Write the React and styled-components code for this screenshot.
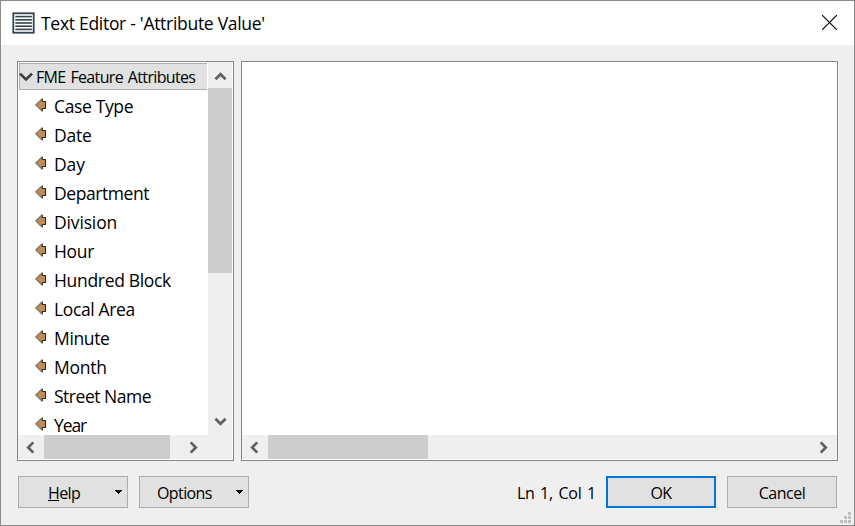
import React from "react";
import styled, { createGlobalStyle } from "styled-components";

const Global = createGlobalStyle`
  * { box-sizing: border-box; }
  body { margin: 0; background: #efefef; }
`;

const Dialog = styled.div`
  width: 855px;
  height: 526px;
  display: flex;
  flex-direction: column;
  background: #efefef;
  border: 1px solid #8b8b8b;
  color: #000;
  font-family: "Open Sans", "Noto Sans", sans-serif;
  position: relative;
  overflow: hidden;
`;

const TitleBar = styled.header`
  height: 44px;
  flex: none;
  display: flex;
  align-items: center;
  background: #fff;
  padding: 0 17px 1px 11px;
  svg { flex: none; display: block; }
`;

const Label = styled.span`
  display: block;
  white-space: pre;
  font-size: ${(p) => p.$size || 17}px;
  line-height: 24px;
  letter-spacing: ${(p) => p.$track || 0}px;
  word-spacing: ${(p) => p.$words || 0}px;
`;

const Title = styled(Label)`
  flex: 1;
  margin: 1px 0 0 6px;
`;

const Panels = styled.main`
  display: flex;
  gap: 7px;
  height: 400px;
  margin: 16px 16px 0;
`;

const Panel = styled.section`
  width: ${(p) => p.$width}px;
  border: 1px solid #828790;
  background: #fff;
  display: flex;
  flex-direction: column;
`;

const Upper = styled.div`
  display: flex;
  height: 373px;
  flex: none;
`;

const Tree = styled.div`
  flex: 1;
  height: 373px;
  padding: 1px 0 0 1px;
`;

const GroupRow = styled.div`
  height: 27px;
  width: 188px;
  border: 1px solid #adadad;
  border-right: 0;
  background: #e1e1e1;
  display: flex;
  align-items: center;
  svg { flex: none; margin-left: -1px; }
`;

const GroupLabel = styled(Label)`
  margin-left: 3px;
`;

const Items = styled.div`
  padding-top: 1px;
`;

const ItemRow = styled.div`
  height: ${(p) => (p.$last ? 25 : 29)}px;
  display: flex;
  align-items: flex-start;
  padding: 3px 0 0 16px;
  svg { flex: none; margin: 4px 7px 0 0; }
`;

const Track = styled.div`
  display: flex;
  flex: none;
  flex-direction: ${(p) => (p.$vertical ? "column" : "row")};
  width: ${(p) => (p.$vertical ? "24px" : "auto")};
  height: ${(p) => (p.$vertical ? "auto" : "24px")};
  margin-right: ${(p) => (p.$vertical ? 1 : p.$edge || 0)}px;
  padding-right: ${(p) => p.$corner || 0}px;
  background: #efefef;
`;

const ArrowCell = styled.div`
  width: ${(p) => p.$w || 26}px;
  height: ${(p) => p.$h || 24}px;
  padding: ${(p) => p.$pad || "0"};
  flex: none;
  display: flex;
  align-items: center;
  justify-content: center;
`;

const Thumb = styled.div`
  flex: none;
  width: ${(p) => p.$w}px;
  height: ${(p) => p.$h}px;
  background: #cdcdcd;
`;

const Fill = styled.div`
  flex: 1;
`;

const Footer = styled.footer`
  display: flex;
  align-items: center;
  margin: 15px 17px 0;
  height: 32px;
  ${Label} { padding-top: 2px; }
`;

const Button = styled.button`
  width: 110px;
  height: 32px;
  padding: 0;
  margin: 0 0 0 ${(p) => p.$gap || 0}px;
  display: flex;
  align-items: center;
  justify-content: center;
  background: #e1e1e1;
  border: ${(p) => (p.$primary ? "2px solid #0078d7" : "1px solid #adadad")};
  font-family: inherit;
  color: #000;
`;

const MenuButton = styled(Button)`
  justify-content: flex-start;
  padding-left: ${(p) => p.$inset}px;
  svg { margin: -1px 5px 0 auto; }
`;

const Mnemonic = styled.span`
  text-decoration: underline;
  text-decoration-thickness: 1px;
  text-underline-offset: 1px;
`;

const Grip = styled.svg`
  position: absolute;
  right: 3px;
  bottom: 2px;
`;

const EditorIcon = () => (
  <svg width="23" height="22" viewBox="0 0 23 22">
    <rect x="0.2" y="0.2" width="22.6" height="21.6" fill="#65727a" />
    <rect x="1" y="1" width="21" height="20" fill="#34444e" />
    <rect x="2.2" y="2.2" width="18.6" height="17.6" fill="#fff" />
    {[3.8, 7, 10.2, 13.4, 16.6].map((y) => (
      <rect key={y} x="3.3" y={y} width="16.6" height="1.6" fill="#34444e" />
    ))}
  </svg>
);

const CloseIcon = () => (
  <svg width="15" height="15" viewBox="0 0 15 15">
    <path d="M0 0L15 15M15 0L0 15" stroke="#000" strokeWidth="1.15" />
  </svg>
);

const AttributeIcon = () => (
  <svg width="12" height="14" viewBox="0 0 12 14">
    <path d="M0.8 7L7 0.9V3.5H10.5V10.5H7V13.1Z" fill="#be8c56" stroke="#7b746a" strokeWidth="1.2" />
    <path d="M7.4 1.2V3.5H10.5V10.5H7.4V12.8" fill="none" stroke="#35281a" />
  </svg>
);

const turns = { up: 0, right: 90, down: 180, left: 270 };

const ScrollArrow = ({ dir }) => (
  <svg width="13" height="13" viewBox="0 0 13 13">
    <path
      d="M1.4 9.3L6.5 4.2L11.6 9.3"
      fill="none"
      stroke="#606060"
      strokeWidth="2.7"
      transform={`rotate(${turns[dir]} 6.5 6.5)`}
    />
  </svg>
);

const Expander = () => (
  <svg width="14" height="10" viewBox="0 0 14 10">
    <path d="M1 1.6L7 7.4L13 1.6" fill="none" stroke="#3c3c3c" strokeWidth="2.7" />
  </svg>
);

const Caret = () => (
  <svg width="7" height="4" viewBox="0 0 7 4" shapeRendering="crispEdges">
    <path d="M0 0H7V1H6V2H5V3H4V4H3V3H2V2H1V1H0Z" />
  </svg>
);

const attributes = [
  ["Case Type", -0.36],
  ["Date", -0.2],
  ["Day", -0.1],
  ["Department", -0.42],
  ["Division", -0.15],
  ["Hour", -0.3],
  ["Hundred Block", -0.32],
  ["Local Area", -0.36],
  ["Minute", -0.35],
  ["Month", -0.25],
  ["Street Name", -0.48],
  ["Year", -1.1],
];

export default function App() {
  return (
    <Dialog>
      <Global />
      <TitleBar>
        <EditorIcon />
        <Title $size={17.5} $track={-0.29}>Text Editor - 'Attribute Value'</Title>
        <CloseIcon />
      </TitleBar>
      <Panels>
        <Panel $width={217}>
          <Upper>
            <Tree>
              <GroupRow>
                <Expander />
                <GroupLabel $size={16} $track={-0.65} $words={1.3}>FME Feature Attributes</GroupLabel>
              </GroupRow>
              <Items>
                {attributes.map(([name, track], i) => (
                  <ItemRow key={name} $last={i === attributes.length - 1}>
                    <AttributeIcon />
                    <Label $size={17.5} $track={track}>{name}</Label>
                  </ItemRow>
                ))}
              </Items>
            </Tree>
            <Track $vertical>
              <ArrowCell $w={24} $h={26} $pad="2px 0 0"><ScrollArrow dir="up" /></ArrowCell>
              <Thumb $w={24} $h={185} />
              <Fill />
              <ArrowCell $w={24} $h={27}><ScrollArrow dir="down" /></ArrowCell>
            </Track>
          </Upper>
          <Track $corner={25} $edge={1}>
            <ArrowCell $pad="0 2px 0 0"><ScrollArrow dir="left" /></ArrowCell>
            <Thumb $w={126} $h={24} />
            <Fill />
            <ArrowCell $w={27}><ScrollArrow dir="right" /></ArrowCell>
          </Track>
        </Panel>
        <Panel $width={597}>
          <Upper />
          <Track>
            <ArrowCell $pad="0 2px 0 0"><ScrollArrow dir="left" /></ArrowCell>
            <Thumb $w={160} $h={24} />
            <Fill />
            <ArrowCell $w={27}><ScrollArrow dir="right" /></ArrowCell>
          </Track>
        </Panel>
      </Panels>
      <Footer>
        <MenuButton $inset={29}>
          <Label $size={16} $track={-0.6}><Mnemonic>H</Mnemonic>elp</Label>
          <Caret />
        </MenuButton>
        <MenuButton $gap={11} $inset={17}>
          <Label $size={16} $track={-0.6}>Options</Label>
          <Caret />
        </MenuButton>
        <Fill />
        <Label $size={16} $track={-0.2} $words={1.5}>Ln 1, Col 1</Label>
        <Button $gap={10} $primary><Label $size={16} $track={-0.7}>OK</Label></Button>
        <Button $gap={11}><Label $size={16} $track={-0.5}>Cancel</Label></Button>
      </Footer>
      <Grip width="11" height="11" viewBox="0 0 11 11" fill="#bfbfbf" shapeRendering="crispEdges">
        <path d="M8 0h3v3h-3zM8 4h3v3h-3zM8 8h3v3h-3zM4 4h3v3h-3zM4 8h3v3h-3zM0 8h3v3h-3z" />
      </Grip>
    </Dialog>
  );
}
